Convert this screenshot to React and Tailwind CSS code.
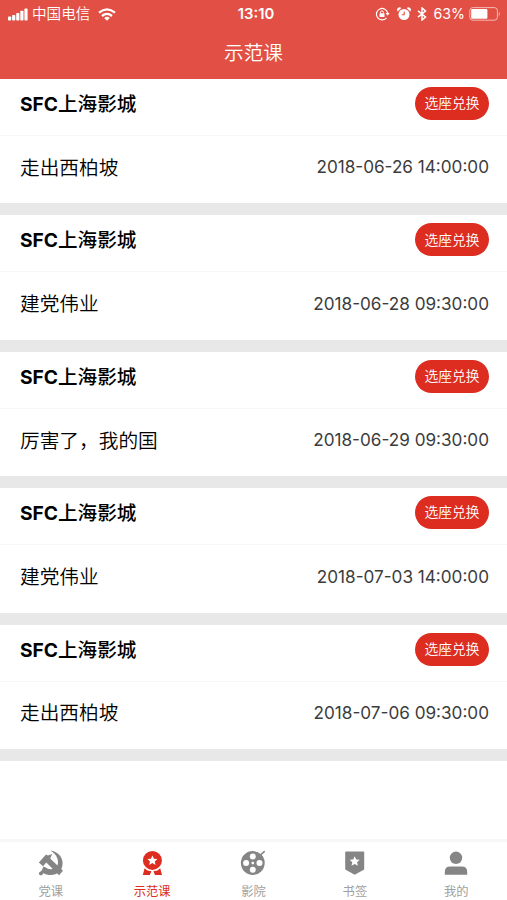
// App.jsx
import React from 'react';

const sessions = [
  { id: 1, brand: 'SFC', cinema: '上海影城', film: '走出西柏坡', time: '2018-06-26 14:00:00' },
  { id: 2, brand: 'SFC', cinema: '上海影城', film: '建党伟业', time: '2018-06-28 09:30:00' },
  { id: 3, brand: 'SFC', cinema: '上海影城', film: '厉害了，我的国', time: '2018-06-29 09:30:00' },
  { id: 4, brand: 'SFC', cinema: '上海影城', film: '建党伟业', time: '2018-07-03 14:00:00' },
  { id: 5, brand: 'SFC', cinema: '上海影城', film: '走出西柏坡', time: '2018-07-06 09:30:00' },
];

const STAR = 'M0 -5.2L1.5 -1.9L5 -1.6L2.4 0.8L3.2 4.3L0 2.5L-3.2 4.3L-2.4 0.8L-5 -1.6L-1.5 -1.9Z';

const PartyIcon = () => (
  <svg width="26" height="26" viewBox="0 0 26 26" fill="currentColor">
    <path d="M12.4 0.6C19.5 1.4 24.6 7 24.6 13.2C24.6 20.4 19.2 25 12.8 25C9.8 25 7.3 24.2 5.4 22.9C4.8 24.7 3.6 25.5 2.3 25.2C0.8 24.8 0.6 23.1 1.4 22.2C2.1 21.5 3.2 21.3 3.7 20.4L5.4 16.6L8.4 17.8C9.8 19 11 19.4 12.8 19.2C17 19 20 16.6 20 12.2C20 7.7 17.3 3.7 12.4 0.6Z" />
    <path d="M0.9 12.4L8 4.4L10 5.4L14.2 4L12.2 8.4L25 20.8L21 25.2L8.3 12.6L5 16.2Z" />
  </svg>
);

const MedalIcon = () => (
  <svg width="26" height="26" viewBox="0 0 26 26" fill="currentColor">
    <circle cx="13.4" cy="10.4" r="9.5" />
    <path d="M5.6 18.2L8.4 20.4L12.4 21.2L10.8 25H3.8Z" />
    <path d="M21.2 18.2L18.4 20.4L14.4 21.2L16 25H23Z" />
    <path d={STAR} transform="translate(13.4 10.6)" fill="white" />
  </svg>
);

const ReelIcon = () => (
  <svg width="26" height="26" viewBox="0 0 26 26" fill="currentColor">
    <circle cx="12.8" cy="13" r="11.9" />
    <path d="M20 5.5L24.2 1.6" stroke="currentColor" strokeWidth="1.6" strokeLinecap="round" />
    <g fill="white">
      <circle cx="12.8" cy="6.4" r="3" />
      <circle cx="12.8" cy="19.8" r="3" />
      <circle cx="6.1" cy="13.1" r="3" />
      <circle cx="19.5" cy="13.1" r="3" />
      <circle cx="12.8" cy="13.1" r="1.4" />
    </g>
  </svg>
);

const BookmarkIcon = () => (
  <svg width="26" height="26" viewBox="0 0 26 26" fill="currentColor">
    <path d="M4.2 1.5H21.2Q22.2 1.5 22.2 2.5V19.6L12.7 24.8L3.2 19.6V2.5Q3.2 1.5 4.2 1.5Z" />
    <path d={STAR} transform="translate(12.7 11.4)" fill="white" />
  </svg>
);

const UserIcon = () => (
  <svg width="26" height="26" viewBox="0 0 26 26" fill="currentColor">
    <circle cx="13" cy="7.8" r="6.2" />
    <path d="M1.8 24.7V22Q1.8 16.6 7.2 16.6H18.7Q24.2 16.6 24.2 22V24.7Z" />
  </svg>
);

const tabs = [
  { label: '党课', icon: PartyIcon },
  { label: '示范课', icon: MedalIcon, active: true },
  { label: '影院', icon: ReelIcon },
  { label: '书签', icon: BookmarkIcon },
  { label: '我的', icon: UserIcon },
];

const StatusBar = () => (
  <div className="grid h-7 grid-cols-3 items-center text-sm leading-none">
    <div className="flex items-center pl-2">
      <svg width="20" height="13" viewBox="0 0 20 13" fill="white">
        <rect x="0" y="8.5" width="3.2" height="4" rx="0.8" />
        <rect x="4.1" y="7" width="3.2" height="5.5" rx="0.8" />
        <rect x="8.2" y="5" width="3.2" height="7.5" rx="0.8" />
        <rect x="12.3" y="2.8" width="3.2" height="9.7" rx="0.8" />
        <rect x="16.4" y="0.6" width="3.2" height="11.9" rx="0.8" />
      </svg>
      <span className="ml-1 text-[14.6px] font-[350]">中国电信</span>
      <svg className="ml-2" width="18" height="13" viewBox="0 0 18 13" fill="none" stroke="white" strokeWidth="2.3">
        <path d="M1 4.7Q9 -1.9 17 4.7" />
        <path d="M4 8Q9 3.8 14 8" />
        <path d="M6.2 9.9Q9 7.6 11.8 9.9L9 12.8Z" fill="white" stroke="none" />
      </svg>
    </div>
    <span className="pl-[5px] text-center text-[14.8px] font-semibold">13:10</span>
    <div className="flex items-center justify-end pr-[6px]">
      <svg width="15" height="14" viewBox="0 0 15 14" fill="none" stroke="white" strokeWidth="1.2">
        <path d="M11.5 10.8A5.7 5.7 0 1 1 12.7 6.2" />
        <path d="M10.6 5.9H14.6L12.6 8.7Z" fill="white" stroke="none" />
        <rect x="4.5" y="6.2" width="5" height="3.8" rx="0.5" fill="white" stroke="none" />
        <path d="M5.5 6.5V5.4A1.5 1.5 0 0 1 8.5 5.4V6.5" strokeWidth="1" />
      </svg>
      <svg className="ml-[7px]" width="14" height="14" viewBox="0 0 14 14" fill="white">
        <circle cx="7" cy="7.5" r="5.5" />
        <path d="M0.8 4.4A2.3 2.3 0 0 1 4.3 1.1ZM13.2 4.4A2.3 2.3 0 0 0 9.7 1.1Z" />
        <path d="M7.2 4.4V7.8H4.8" fill="none" stroke="#e25045" strokeWidth="1.1" />
      </svg>
      <svg className="ml-[6px]" width="10" height="14" viewBox="0 0 10 14" fill="none" stroke="white" strokeWidth="1.5">
        <path d="M1 3.9L8.5 10L5 13V1L8.5 4L1 10.1" />
      </svg>
      <span className="ml-[7px] text-[14.2px]">63%</span>
      <svg className="ml-1" width="32" height="14" viewBox="0 0 32 14">
        <rect x="0.8" y="0.6" width="27.6" height="12.6" rx="3" fill="none" stroke="white" strokeOpacity="0.6" />
        <rect x="2.2" y="2.1" width="16.2" height="9.6" rx="1.2" fill="white" />
        <path d="M29.8 4.8Q31.8 7 29.8 9.2Z" fill="white" fillOpacity="0.6" />
      </svg>
    </div>
  </div>
);

const SessionCard = ({ session }) => (
  <li className="h-[136.45px] border-b-12 border-[#e8e8e8] bg-white">
    <div className="flex h-[57px] items-start justify-between border-b border-[#f7f7f7] pt-2 pr-[18px] pl-5">
      <h3 className="text-[19.6px] leading-[35px] font-medium text-black">
        <span className="text-[19.2px] font-bold">{session.brand}</span>
        {session.cinema}
      </h3>
      <button className="h-[33px] w-[74px] rounded-full bg-[#dc2d20] text-[13.8px] font-[350] text-white">
        选座兑换
      </button>
    </div>
    <div className="flex h-[65px] items-center justify-between pr-[18px] pl-5">
      <p className="text-[19.7px] leading-none font-[350] text-black">{session.film}</p>
      <span className="pb-[3px] text-[17.15px] leading-none text-[#3c3c3c]">{session.time}</span>
    </div>
  </li>
);

const App = () => {
  return (
    <div className="flex h-[900px] w-[507px] flex-col overflow-hidden bg-white font-[Inter,'Noto_Sans_CJK_SC',sans-serif]">
      <header className="h-[79px] shrink-0 bg-[#e25045] text-white">
        <StatusBar />
        <h1 className="pt-[10px] text-center text-[19.6px] leading-[30px] font-[350]">示范课</h1>
      </header>
      <ul className="flex-1">
        {sessions.map((session) => (
          <SessionCard key={session.id} session={session} />
        ))}
      </ul>
      <nav className="grid h-[61px] shrink-0 grid-cols-5 border-t-3 border-[#f7f7f7]">
        {tabs.map(({ label, icon: Icon, active }) => (
          <div
            key={label}
            className={`flex flex-col items-center pt-2 ${active ? 'text-[#dc2d20]' : 'text-[#858585]'}`}
          >
            <Icon />
            <span className={`mt-2 text-[12.3px] leading-4 ${active ? '' : 'text-[#a0a0a0]'}`}>{label}</span>
          </div>
        ))}
      </nav>
    </div>
  );
};

export default App;
